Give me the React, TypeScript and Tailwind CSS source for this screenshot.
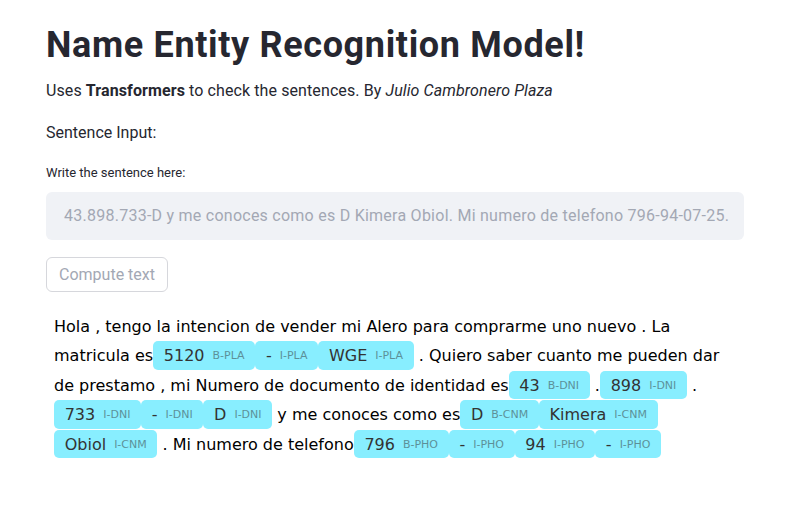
import React from "react";

type Tok = string | [string, string];

const tokens: Tok[] = [
  "Hola , tengo la intencion de vender mi Alero para comprarme uno nuevo . La matricula es",
  ["5120", "B-PLA"],
  ["-", "I-PLA"],
  ["WGE", "I-PLA"],
  " . Quiero saber cuanto me pueden dar de prestamo , mi Numero de documento de identidad es",
  ["43", "B-DNI"],
  " .",
  ["898", "I-DNI"],
  " .",
  ["733", "I-DNI"],
  ["-", "I-DNI"],
  ["D", "I-DNI"],
  " y me conoces como es",
  ["D", "B-CNM"],
  ["Kimera", "I-CNM"],
  ["Obiol", "I-CNM"],
  " . Mi numero de telefono",
  ["796", "B-PHO"],
  ["-", "I-PHO"],
  ["94", "I-PHO"],
  ["-", "I-PHO"],
];

function Chip({ body, label }: { body: string; label: string }) {
  return (
    <span className="inline-flex items-center rounded-[5px] bg-[#88eeff] px-[10.7px] py-[2.75px] leading-[23px] text-[#333333] align-baseline">
      {body}
      <span className="pl-2 text-[11px] opacity-50">{label}</span>
    </span>
  );
}

export default function App() {
  const ui = { fontFamily: "Roboto, 'Liberation Sans', sans-serif" };
  return (
    <div className="min-h-[510px] w-[787px] bg-white text-[#262730]" style={ui}>
      <div className="w-[698px] ml-[46px] pt-[23px]">
        <h1 className="h-[44px] leading-[44px] text-[36px] font-bold tracking-[0.65px] text-[#262730]">
          Name Entity Recognition Model!
        </h1>
        <p className="mt-[12px] h-[24px] leading-[24px] text-[16px] tracking-[0.1px]">
          Uses <b className="font-bold">Transformers</b> to check the sentences. By{" "}
          <i>Julio Cambronero Plaza</i>
        </p>
        <p className="mt-[18px] h-[24px] leading-[24px] text-[16px]">Sentence Input:</p>
        <p className="mt-[18px] h-[20px] leading-[20px] text-[13px]">Write the sentence here:</p>
        <div className="mt-[9px] h-[48px] rounded-[6px] bg-[#f0f2f6] flex items-center pl-[18px] text-[16px] tracking-[0.25px] text-[#a3a8b4] overflow-hidden whitespace-nowrap">
          43.898.733-D y me conoces como es D Kimera Obiol. Mi numero de telefono 796-94-07-25.
        </div>
        <button className="mt-[17px] h-[35px] w-[122px] rounded-[6px] border border-[#d6d7dc] bg-white text-[16px] text-[#a3a8b4] flex items-center justify-center">
          Compute text
        </button>
        <div
          className="mt-[19.5px] ml-[8px] w-[682px] text-[16px] leading-[29.5px] text-black"
          style={{ fontFamily: "'DejaVu Sans', sans-serif" }}
        >
          {tokens.map((t, i) =>
            typeof t === "string" ? (
              <React.Fragment key={i}>{t}</React.Fragment>
            ) : (
              <Chip key={i} body={t[0]} label={t[1]} />
            )
          )}
        </div>
      </div>
    </div>
  );
}
